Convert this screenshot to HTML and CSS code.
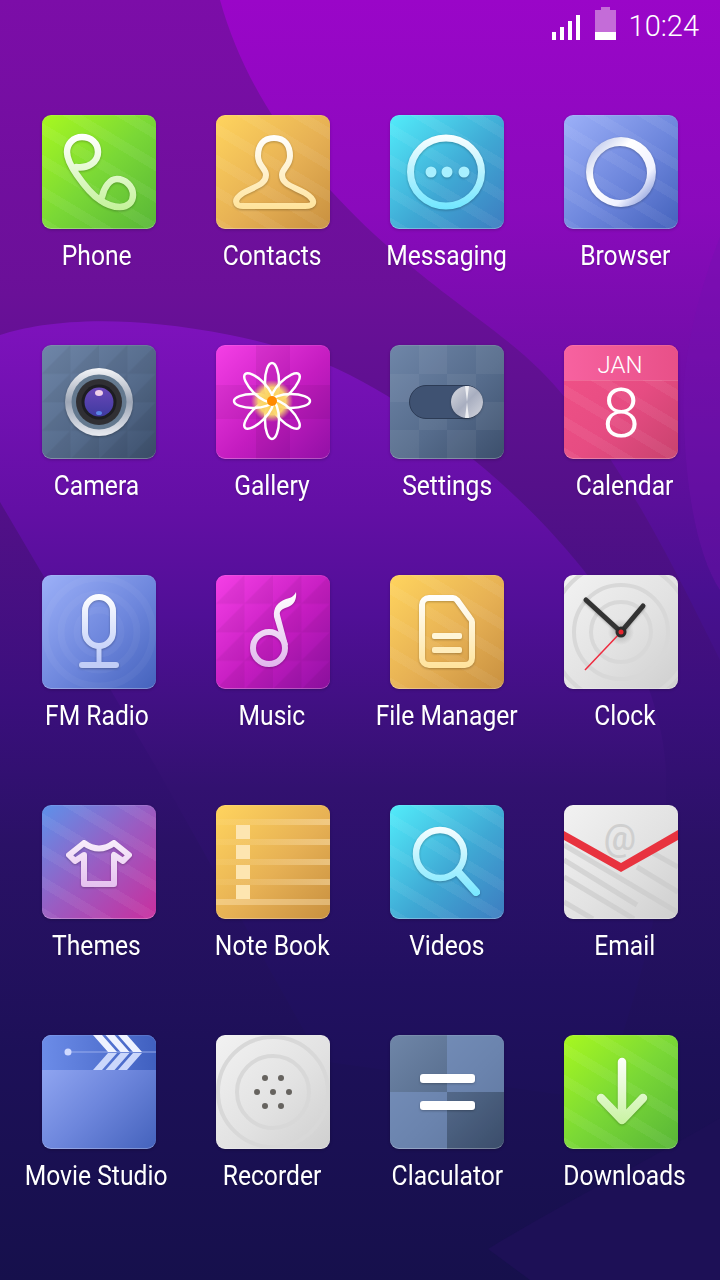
FILE: index.html
```html
<!DOCTYPE html>
<html lang="en">
<head>
<meta charset="utf-8">
<title>Home</title>
<link rel="stylesheet" href="styles.css">
</head>
<body>
<svg class="wallpaper" viewBox="0 0 720 1280" aria-hidden="true">
  <defs>
    <linearGradient id="wpBase" x1="0" y1="0" x2="0" y2="1">
      <stop offset="0" stop-color="#7c0da8"/><stop offset=".23" stop-color="#6a1098"/><stop offset=".4" stop-color="#521088"/><stop offset=".55" stop-color="#3a0f7c"/><stop offset=".66" stop-color="#2a1166"/><stop offset=".82" stop-color="#1d1058"/><stop offset="1" stop-color="#16104c"/>
    </linearGradient>
    <linearGradient id="wpTop" gradientUnits="userSpaceOnUse" x1="0" y1="0" x2="0" y2="700"><stop offset="0" stop-color="#9a06c8"/><stop offset=".3" stop-color="#8a0abc"/><stop offset=".5" stop-color="#740daa"/><stop offset=".72" stop-color="#5a0f9a"/><stop offset=".85" stop-color="#481090"/><stop offset="1" stop-color="#3e1080"/></linearGradient>
    <linearGradient id="wpMid" gradientUnits="userSpaceOnUse" x1="0" y1="320" x2="0" y2="1100"><stop offset="0" stop-color="#7e12bc"/><stop offset=".25" stop-color="#620fa4"/><stop offset=".38" stop-color="#500f96"/><stop offset=".6" stop-color="#321170"/><stop offset=".85" stop-color="#211060"/><stop offset="1" stop-color="#1c1058"/></linearGradient>
    <linearGradient id="gGreen" gradientUnits="userSpaceOnUse" x1="0" y1="20" x2="0" y2="95"><stop offset="0" stop-color="#fff"/><stop offset="1" stop-color="#c4f29a"/></linearGradient>
    <linearGradient id="gGold" gradientUnits="userSpaceOnUse" x1="0" y1="20" x2="0" y2="95"><stop offset="0" stop-color="#fff"/><stop offset="1" stop-color="#ffe39a"/></linearGradient>
    <linearGradient id="gCyan" gradientUnits="userSpaceOnUse" x1="0" y1="18" x2="0" y2="95"><stop offset="0" stop-color="#fff"/><stop offset="1" stop-color="#6fe6ff"/></linearGradient>
    <linearGradient id="gBlue" gradientUnits="userSpaceOnUse" x1="0" y1="18" x2="0" y2="95"><stop offset="0" stop-color="#fff"/><stop offset="1" stop-color="#b4c4f8"/></linearGradient>
    <linearGradient id="gPink" gradientUnits="userSpaceOnUse" x1="0" y1="18" x2="0" y2="95"><stop offset="0" stop-color="#fff"/><stop offset="1" stop-color="#e0b4ec"/></linearGradient>
    <linearGradient id="gRing" x1="0" y1="0" x2="1" y2="1"><stop offset="0" stop-color="#a9b6e6"/><stop offset=".35" stop-color="#fff"/><stop offset=".7" stop-color="#f0f2ff"/><stop offset=".85" stop-color="#a9b6e6"/><stop offset="1" stop-color="#fff"/></linearGradient>
    <linearGradient id="gSilver" x1="0" y1="0" x2="0" y2="1"><stop offset="0" stop-color="#f4f5f8"/><stop offset=".5" stop-color="#9da6b6"/><stop offset="1" stop-color="#e8eaf0"/></linearGradient>
    <linearGradient id="gKnob" x1="0" y1="0" x2="1" y2="1"><stop offset="0" stop-color="#d9dbe2"/><stop offset=".5" stop-color="#a8aec0"/><stop offset="1" stop-color="#d4d6de"/></linearGradient>
    <linearGradient id="gLens" x1="0" y1="0" x2="0" y2="1"><stop offset="0" stop-color="#6a48b8"/><stop offset="1" stop-color="#3e3aa0"/></linearGradient>
    <linearGradient id="gRoseHead" x1="0" y1="0" x2="1" y2="0"><stop offset="0" stop-color="#f762a0"/><stop offset="1" stop-color="#e85088"/></linearGradient>
    <linearGradient id="gClapHead" x1="0" y1="0" x2="1" y2="0"><stop offset="0" stop-color="#6c8ce8"/><stop offset="1" stop-color="#4060c0"/></linearGradient>
    <linearGradient id="gNoteLine" gradientUnits="userSpaceOnUse" x1="0" y1="0" x2="114" y2="0"><stop offset="0" stop-color="#ffe9bd" stop-opacity=".08"/><stop offset=".3" stop-color="#ffe9bd" stop-opacity=".15"/><stop offset="1" stop-color="#ffe9bd" stop-opacity=".45"/></linearGradient>
    <radialGradient id="gPetal" gradientUnits="userSpaceOnUse" cx="56" cy="56" r="21"><stop offset="0" stop-color="#fccf50"/><stop offset=".65" stop-color="#fbd76e" stop-opacity=".95"/><stop offset="1" stop-color="#fbd76e" stop-opacity="0"/></radialGradient>
    <radialGradient id="gHalo"><stop offset="0" stop-color="#888" stop-opacity=".6"/><stop offset="1" stop-color="#888" stop-opacity="0"/></radialGradient>
    <pattern id="pTri" width="28.5" height="28.5" patternUnits="userSpaceOnUse"><path d="M0 28.5 28.5 0V28.5Z" fill="#000" fill-opacity=".05"/><path d="M0 0H28.5" stroke="#000" stroke-opacity=".03"/></pattern>
  </defs>
  <rect width="720" height="1280" fill="url(#wpBase)"/>
  <path d="M220 0C245 90 300 165 375 235C440 295 500 330 540 370C590 420 640 500 690 600L720 660V0Z" fill="url(#wpTop)"/>
  <path d="M720 237C695 300 680 370 684 420C686 500 700 560 720 590Z" fill="#7410b0" fill-opacity=".35"/>
  <path d="M0 335C40 322 115 312 230 335C320 352 390 390 460 449C520 495 570 550 597 588C640 650 665 720 666 775C668 880 650 960 600 1100L321 1061 156 767 0 502Z" fill="url(#wpMid)"/>
  <path d="M720 1118C640 1165 560 1205 488 1249L530 1280H720Z" fill="#1d1056"/>
</svg>

<header class="status">
  <svg class="signal" width="28" height="25" viewBox="0 0 28 25" aria-hidden="true"><path d="M0 17h4v8H0zM8 12h4v13H8zM16 6h4v19h-4zM24 0h4v25h-4z" fill="#fff"/></svg>
  <svg class="battery" width="21" height="33" viewBox="0 0 21 33" aria-hidden="true"><path d="M6 0h9v3h6v22H0V3h6z" fill="#c46cd8"/><path d="M0 25h21v8H0z" fill="#fff"/></svg>
  <span class="time">10:24</span>
</header>

<main class="grid">
  <div class="app c1"><div class="icon green stripes"><svg class="art" viewBox="0 0 114 114"><path class="glyph" d="M34 52C46 54 56 47 56 37 56 28 49 22 40 22 31 22 25 29 25 37 25 45 30 53 35 60 42 70 50 80 58 85 65 90 72 92 78 92 86 92 91 87 91 80 91 71 83 64 75 64 68 64 62 72 60 82" fill="none" stroke="url(#gGreen)" stroke-width="6.500" stroke-linecap="round"/></svg></div><span class="label">Phone</span></div>

  <div class="app c2"><div class="icon gold stripes"><svg class="art" viewBox="0 0 114 114"><path class="glyph" d="M58 23C47 23 42 31 42 41 42 51 50 53 50 60 50 70 37 72 27 78 21 82 19 86 21 89 22 91 25 91 27 91H89C92 91 96 91 97 88 98 85 94 81 89 78 79 72 66 70 66 60 66 53 74 51 74 41 74 31 69 23 58 23Z" fill="none" stroke="url(#gGold)" stroke-width="6"/></svg></div><span class="label">Contacts</span></div>

  <div class="app c3"><div class="icon cyan stripes"><svg class="art" viewBox="0 0 114 114"><g class="glyph"><ellipse cx="56" cy="57" rx="35.500" ry="34" fill="none" stroke="url(#gCyan)" stroke-width="7"/><circle cx="41" cy="57" r="5.500" fill="#a8f0ff"/><circle cx="57" cy="57" r="5.500" fill="#a8f0ff"/><circle cx="74" cy="57" r="5.500" fill="#a8f0ff"/></g></svg></div><span class="label">Messaging</span></div>

  <div class="app c4"><div class="icon periwinkle stripes"><svg class="art" viewBox="0 0 114 114"><path class="glyph" fill-rule="evenodd" d="M57 22a35 35 0 1 0 0 70 35 35 0 1 0 0-70ZM56 31a27 27 0 1 1 0 54 27 27 0 1 1 0-54Z" fill="url(#gRing)"/></svg></div><span class="label">Browser</span></div>

  <div class="app c1"><div class="icon slate"><svg class="art" viewBox="0 0 114 114"><rect width="114" height="114" fill="url(#pTri)"/><g class="glyph"><circle cx="57" cy="57" r="34" fill="url(#gSilver)"/></g><circle cx="57" cy="57" r="27.500" fill="#64798f"/><circle cx="57" cy="57" r="23" fill="#302f33"/><circle cx="57" cy="57" r="17.500" fill="#1d1d22"/><circle cx="57" cy="57" r="14.500" fill="url(#gLens)"/><ellipse cx="57" cy="48" rx="4" ry="3" fill="#efcfe8"/><ellipse cx="57" cy="68" rx="3" ry="2" fill="#5a86e6"/></svg></div><span class="label">Camera</span></div>

  <div class="app c2"><div class="icon magenta"><svg class="art" viewBox="0 0 114 114"><path d="M40 0h34v114H40z" fill="#000" fill-opacity=".06"/><path d="M0 40h114v34H0z" fill="#000" fill-opacity=".05"/><g class="petals"><ellipse cx="56" cy="37" rx="7" ry="19"/><ellipse cx="56" cy="37" rx="7" ry="19" transform="rotate(45 56 56)"/><ellipse cx="56" cy="37" rx="7" ry="19" transform="rotate(90 56 56)"/><ellipse cx="56" cy="37" rx="7" ry="19" transform="rotate(135 56 56)"/><ellipse cx="56" cy="37" rx="7" ry="19" transform="rotate(180 56 56)"/><ellipse cx="56" cy="37" rx="7" ry="19" transform="rotate(225 56 56)"/><ellipse cx="56" cy="37" rx="7" ry="19" transform="rotate(270 56 56)"/><ellipse cx="56" cy="37" rx="7" ry="19" transform="rotate(315 56 56)"/></g><circle cx="56" cy="56" r="5" fill="#ff8a00"/></svg></div><span class="label">Gallery</span></div>

  <div class="app c3"><div class="icon slate"><svg class="art" viewBox="0 0 114 114"><path d="M29 0h28v29H29zM86 0h28v29H86zM0 29h29v28H0zM57 29h29v28H57zM29 57h28v28H29zM86 57h28v28H86zM0 85h29v29H0zM57 85h29v29H57z" fill="#fff" fill-opacity=".05"/><rect x="19.500" y="40.500" width="73" height="33" rx="16.500" fill="#3f5272" stroke="#2c3b55"/><g class="glyph"><circle cx="77" cy="57" r="16" fill="url(#gKnob)"/><path d="M77 57 75 41h4zM77 57 75 73h4z" fill="#fff" fill-opacity=".75"/></g></svg></div><span class="label">Settings</span></div>

  <div class="app c4"><div class="icon rose stripes"><svg class="art" viewBox="0 0 114 114"><rect width="114" height="35" fill="url(#gRoseHead)"/><rect y="35" width="114" height="1" fill="#fff" fill-opacity=".15"/><text class="cal-month" x="56" y="28" text-anchor="middle">JAN</text><text class="cal-day" x="57" y="92" text-anchor="middle">8</text></svg></div><span class="label">Calendar</span></div>

  <div class="app c1"><div class="icon periwinkle"><svg class="art" viewBox="0 0 114 114"><g class="rings-soft"><circle cx="57" cy="57" r="22"/><circle cx="57" cy="57" r="38"/><circle cx="57" cy="57" r="54"/></g><g class="glyph"><rect x="43" y="22" width="28" height="49" rx="14" fill="none" stroke="url(#gBlue)" stroke-width="6"/><path d="M57 72V90" stroke="url(#gBlue)" stroke-width="5"/><rect x="37" y="87" width="40" height="6" rx="3" fill="#c2cef6"/></g></svg></div><span class="label">FM Radio</span></div>

  <div class="app c2"><div class="icon magenta"><svg class="art" viewBox="0 0 114 114"><rect width="114" height="114" fill="url(#pTri)"/><g class="glyph"><circle cx="53" cy="73" r="16" fill="none" stroke="url(#gPink)" stroke-width="6"/><path d="M67 72 58 42C57 32 62 27 70 24 75 23 78 21 80 17 81 24 78 30 72 32 66 34 63 36 64 40L72 70Z" fill="url(#gPink)"/></g></svg></div><span class="label">Music</span></div>

  <div class="app c3"><div class="icon gold stripes"><svg class="art" viewBox="0 0 114 114"><g class="glyph"><path d="M39 23H63C65 23 66 24 67 25L80 43C81 44 82 46 82 47V83C82 87 79 90 75 90H39C35 90 32 87 32 83V30C32 26 35 23 39 23Z" fill="none" stroke="url(#gGold)" stroke-width="6"/><rect x="42" y="58" width="30" height="6" rx="2" fill="#fff6d8"/><rect x="42" y="72" width="30" height="6" rx="2" fill="#ffedbc"/></g></svg></div><span class="label">File Manager</span></div>

  <div class="app c4"><div class="icon silver"><svg class="art" viewBox="0 0 114 114"><g class="rings-grey"><circle cx="57" cy="57" r="30"/><circle cx="57" cy="57" r="47"/><circle cx="57" cy="57" r="70"/></g><circle cx="57" cy="57" r="13" fill="url(#gHalo)"/><g class="glyph"><path d="M57 57 22 25M57 57 79 31" fill="none" stroke="#333" stroke-width="5" stroke-linecap="round"/></g><path d="M57 57 21 95" stroke="#ee2b3f" stroke-width="1.500"/><circle cx="57" cy="57" r="5.500" fill="#2c2c2c"/><circle cx="57" cy="57" r="2.500" fill="#e8262f"/></svg></div><span class="label">Clock</span></div>

  <div class="app c1"><div class="icon themes stripes"><svg class="art" viewBox="0 0 114 114"><path class="glyph" d="M42 38Q57 49 72 38L87 50 81 56 72 50V79H42V50L33 56 27 50Z" fill="none" stroke="url(#gPink)" stroke-width="6" stroke-linejoin="round"/></svg></div><span class="label">Themes</span></div>

  <div class="app c2"><div class="icon gold"><svg class="art" viewBox="0 0 114 114"><g class="note-lines"><rect y="14" width="114" height="6"/><rect y="34" width="114" height="6"/><rect y="54" width="114" height="6"/><rect y="74" width="114" height="6"/><rect class="note-last" y="94" width="114" height="6"/></g><g class="note-boxes"><rect x="20" y="20" width="14" height="14"/><rect x="20" y="40" width="14" height="14"/><rect x="20" y="60" width="14" height="14"/><rect x="20" y="80" width="14" height="14"/></g></svg></div><span class="label">Note Book</span></div>

  <div class="app c3"><div class="icon cyan stripes"><svg class="art" viewBox="0 0 114 114"><g class="glyph"><circle cx="50" cy="49" r="24" fill="none" stroke="url(#gCyan)" stroke-width="6.500"/><path d="M68 67 86 87" stroke="url(#gCyan)" stroke-width="8" stroke-linecap="round"/></g></svg></div><span class="label">Videos</span></div>

  <div class="app c4"><div class="icon silver"><svg class="art" viewBox="0 0 114 114"><g class="mail-lines"><path d="M0 40 125 114M0 55 73 100M0 72 70 114M0 97 29 114M73 62 114 87M89 48 114 62"/></g><text class="mail-at" x="56" y="45" text-anchor="middle">@</text><path d="M0 26 57 58 114 25V35L57 67 0 35Z" fill="#e8333f"/></svg></div><span class="label">Email</span></div>

  <div class="app c1"><div class="icon periwinkle"><svg class="art" viewBox="0 0 114 114"><rect width="114" height="35" fill="url(#gClapHead)"/><path d="M26 17H114" stroke="#a9baf2" stroke-width=".8"/><circle cx="26" cy="17" r="3.500" fill="#cfd9ff"/><path d="M51 0h9l15 17h-9zM63.500 0h9l15 17h-9zM76 0h9l15 17h-9z" fill="#eef2ff"/><path d="M66 18h9L60 35h-9zM78.500 18h9L72.500 35h-9zM91 18h9L85 35h-9z" fill="#cbd7fb"/></svg></div><span class="label">Movie Studio</span></div>

  <div class="app c2"><div class="icon silver"><svg class="art" viewBox="0 0 114 114"><g class="rings-grey"><circle cx="57" cy="57" r="36"/><circle cx="57" cy="57" r="55"/></g><g fill="#66635f"><circle cx="49" cy="43" r="3"/><circle cx="65" cy="43" r="3"/><circle cx="41" cy="57" r="3"/><circle cx="57" cy="57" r="3"/><circle cx="73" cy="57" r="3"/><circle cx="49" cy="71" r="3"/><circle cx="65" cy="71" r="3"/></g></svg></div><span class="label">Recorder</span></div>

  <div class="app c3"><div class="icon slate"><svg class="art" viewBox="0 0 114 114"><path d="M57 0h57v57H57zM0 57h57v57H0z" fill="#7f9bd0" fill-opacity=".5"/><path d="M57 57h57v57H57z" fill="#2f4060" fill-opacity=".12"/><g class="glyph" fill="#fff"><rect x="30" y="39" width="55" height="9" rx="3"/><rect x="30" y="66" width="55" height="9" rx="3"/></g></svg></div><span class="label">Claculator</span></div>

  <div class="app c4"><div class="icon green stripes"><svg class="art" viewBox="0 0 114 114"><g class="glyph" fill="none" stroke="url(#gGreen)" stroke-width="8.500" stroke-linecap="round" stroke-linejoin="round"><path d="M58 27V82"/><path d="M37 63 58 85 79 63"/></g></svg></div><span class="label">Downloads</span></div>
</main>
</body>
</html>
```
FILE: styles.css
```css
* { box-sizing: border-box; }
html, body { margin: 0; padding: 0; }
body {
  position: relative;
  width: 720px;
  height: 1280px;
  overflow: hidden;
  background: #2a1168;
  font-family: Roboto, "Liberation Sans", sans-serif;
  color: #fff;
}
.wallpaper { position: absolute; inset: 0; width: 720px; height: 1280px; }

.status {
  position: relative;
  height: 115px;
  display: flex;
  align-items: flex-start;
  justify-content: flex-end;
  padding: 7px 21px 0 0;
}
.signal { margin-top: 8px; margin-right: 15px; }
.battery { margin-right: 13px; }
.time { font-size: 29px; font-weight: 300; line-height: 38px; }

.grid {
  position: relative;
  display: grid;
  grid-template-columns: repeat(4, 174px);
  grid-auto-rows: 230px;
  padding-left: 12px;
}
.app { display: flex; flex-direction: column; align-items: center; }
.label {
  display: block;
  position: relative;
  margin-top: 10px;
  font-size: 28px;
  line-height: 34px;
  white-space: nowrap;
  transform: scaleX(.88);
  text-shadow: 0 1px 2px rgba(0, 0, 0, .2);
}
.c1 .label { left: -2.5px; }
.c2 .label { left: -1px; }
.c4 .label { left: 4px; }

.icon {
  position: relative;
  width: 114px;
  height: 114px;
  border-radius: 9px;
  overflow: hidden;
  box-shadow: 0 1px 3px rgba(0, 0, 0, .22);
}
.icon::after {
  content: "";
  position: absolute;
  inset: 0;
  border-radius: 9px;
  box-shadow: inset 0 -1px 0 rgba(255, 255, 255, .28), inset 0 1px 0 rgba(255, 255, 255, .1);
}
.art { position: relative; display: block; width: 114px; height: 114px; }
.stripes::before {
  content: "";
  position: absolute;
  inset: 0;
  background: repeating-linear-gradient(31deg, rgba(255, 255, 255, .05) 0 10px, transparent 10px 27px);
}
.glyph { filter: drop-shadow(0 1px 1px rgba(0, 0, 0, .25)); }

.green { background: linear-gradient(135deg, #a8f820 0%, #7ad836 50%, #58b638 100%); }
.gold { background: linear-gradient(135deg, #ffd45e 0%, #e6b054 55%, #c89040 100%); }
.cyan { background: linear-gradient(135deg, #52ecfa 0%, #3fa8d4 55%, #3d7cc0 100%); }
.periwinkle { background: linear-gradient(135deg, #9cb0f8 0%, #6d86dc 55%, #4462bc 100%); }
.slate { background: linear-gradient(135deg, #6f86a8 0%, #566c8c 55%, #3c4f6c 100%); }
.magenta { background: linear-gradient(135deg, #f53fe6 0%, #c41cc0 55%, #9210a6 100%); }
.rose { background: linear-gradient(135deg, #f25288 0%, #e64c82 55%, #c8426e 100%); }
.silver { background: linear-gradient(135deg, #f2f2f2 0%, #e2e2e2 55%, #cfcfcf 100%); }
.themes { background: linear-gradient(135deg, #5c92ea 0%, #9a5cc2 50%, #c92e9e 100%); }

.petals ellipse { fill: url(#gPetal); stroke: #fff; stroke-width: 2.5; }
.rings-soft circle { fill: none; stroke: #fff; stroke-opacity: .04; stroke-width: 7; }
.rings-grey circle { fill: none; stroke: #d8d8d8; stroke-width: 4; }
.note-lines rect { fill: url(#gNoteLine); }
.note-lines .note-last { fill: #ffe9bd; fill-opacity: .4; }
.note-boxes rect { fill: #fde5b0; }
.mail-lines path { fill: none; stroke: #c8c8c8; stroke-width: 5; stroke-opacity: .6; }
.cal-month { font-family: Roboto, sans-serif; font-size: 24px; font-weight: 300; fill: #fff; }
.cal-day { font-family: Roboto, sans-serif; font-size: 68px; font-weight: 300; fill: #fff; }
.mail-at { font-family: Roboto, sans-serif; font-size: 36px; font-weight: 500; fill: #cfcfcf; }
```
